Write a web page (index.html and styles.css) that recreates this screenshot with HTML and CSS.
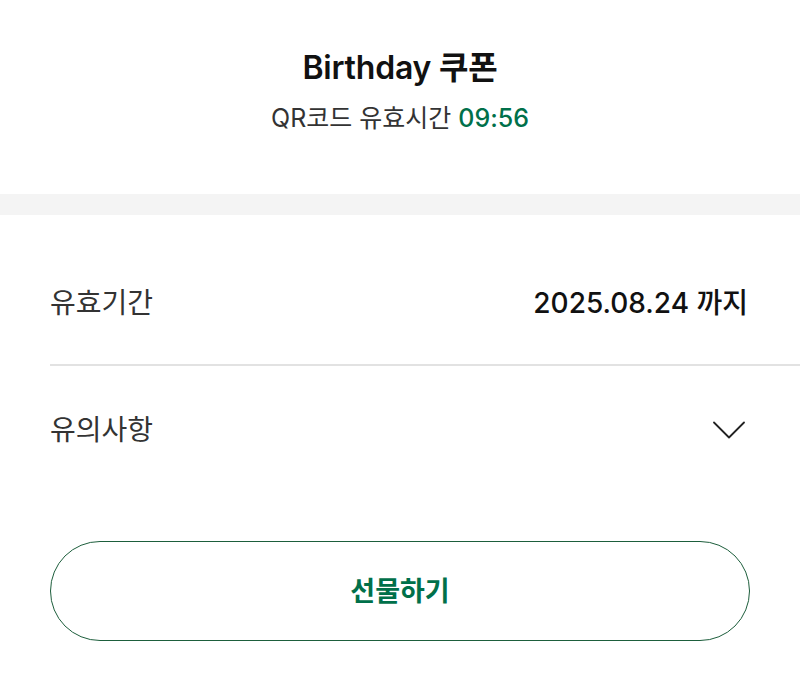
FILE: index.html
```html
<!DOCTYPE html>
<html lang="ko">
<head>
<meta charset="utf-8">
<link rel="stylesheet" href="styles.css">
</head>
<body>
<div class="page">
  <header class="head">
    <h1 class="title">Birthday 쿠폰</h1>
    <p class="sub">QR코드 유효시간 <span class="timer">09:56</span></p>
  </header>
  <div class="band"></div>
  <section class="rows">
    <div class="row row-first">
      <span class="label">유효기간</span>
      <span class="value">2025.08.24 까지</span>
    </div>
    <div class="row row-second">
      <span class="label">유의사항</span>
      <svg class="chev" width="32" height="18" viewBox="0 0 32 18" aria-hidden="true">
        <path d="M1 1.5 L16 16.5 L31 1.5" fill="none" stroke="#222" stroke-width="1.8" stroke-linecap="round" stroke-linejoin="round"/>
      </svg>
    </div>
  </section>
  <div class="btn-wrap">
    <button class="gift">선물하기</button>
  </div>
</div>
</body>
</html>
```

FILE: styles.css
```css
* { box-sizing: border-box; }
html, body { margin: 0; padding: 0; background: #fff; }
body {
  font-family: Inter, "Noto Sans CJK KR", "Noto Sans", sans-serif;
  color: #111;
  width: 800px;
  height: 688px;
  overflow: hidden;
}
.head {
  display: flex;
  flex-direction: column;
  align-items: center;
  padding-top: 46px;
  height: 194px;
}
.title {
  margin: 0;
  font-size: 32px;
  font-weight: 600;
  line-height: 44px;
  color: #111;
  letter-spacing: -0.2px;
}
.sub {
  margin: 11px 0 0;
  font-size: 25px;
  line-height: 34px;
  color: #333;
  font-weight: 400;
}
.timer { color: #00704a; font-weight: 500; }
.band {
  height: 21px;
  background: #f4f4f4;
}
.rows { padding-left: 50px; }
.row {
  display: flex;
  align-items: center;
  justify-content: space-between;
  padding-right: 52px;
}
.row-first {
  height: 151px;
  padding-top: 23px;
  border-bottom: 2px solid #e2e2e2;
}
.row-second {
  height: 128px;
  padding-bottom: 4px;
}
.label {
  font-size: 28px;
  color: #333;
  font-weight: 400;
}
.value {
  font-size: 28px;
  color: #111;
  font-weight: 500;
}
.chev { margin-right: 3px; margin-top: 4px; }
.btn-wrap {
  padding: 47px 50px 0;
}
.gift {
  width: 700px;
  height: 100px;
  border: 1.5px solid #1d5e3c;
  border-radius: 50px;
  background: #fff;
  color: #00704a;
  font-family: "Noto Sans CJK KR", sans-serif;
  font-size: 27px;
  font-weight: 700;
  padding-bottom: 4px;
  cursor: pointer;
}
```
